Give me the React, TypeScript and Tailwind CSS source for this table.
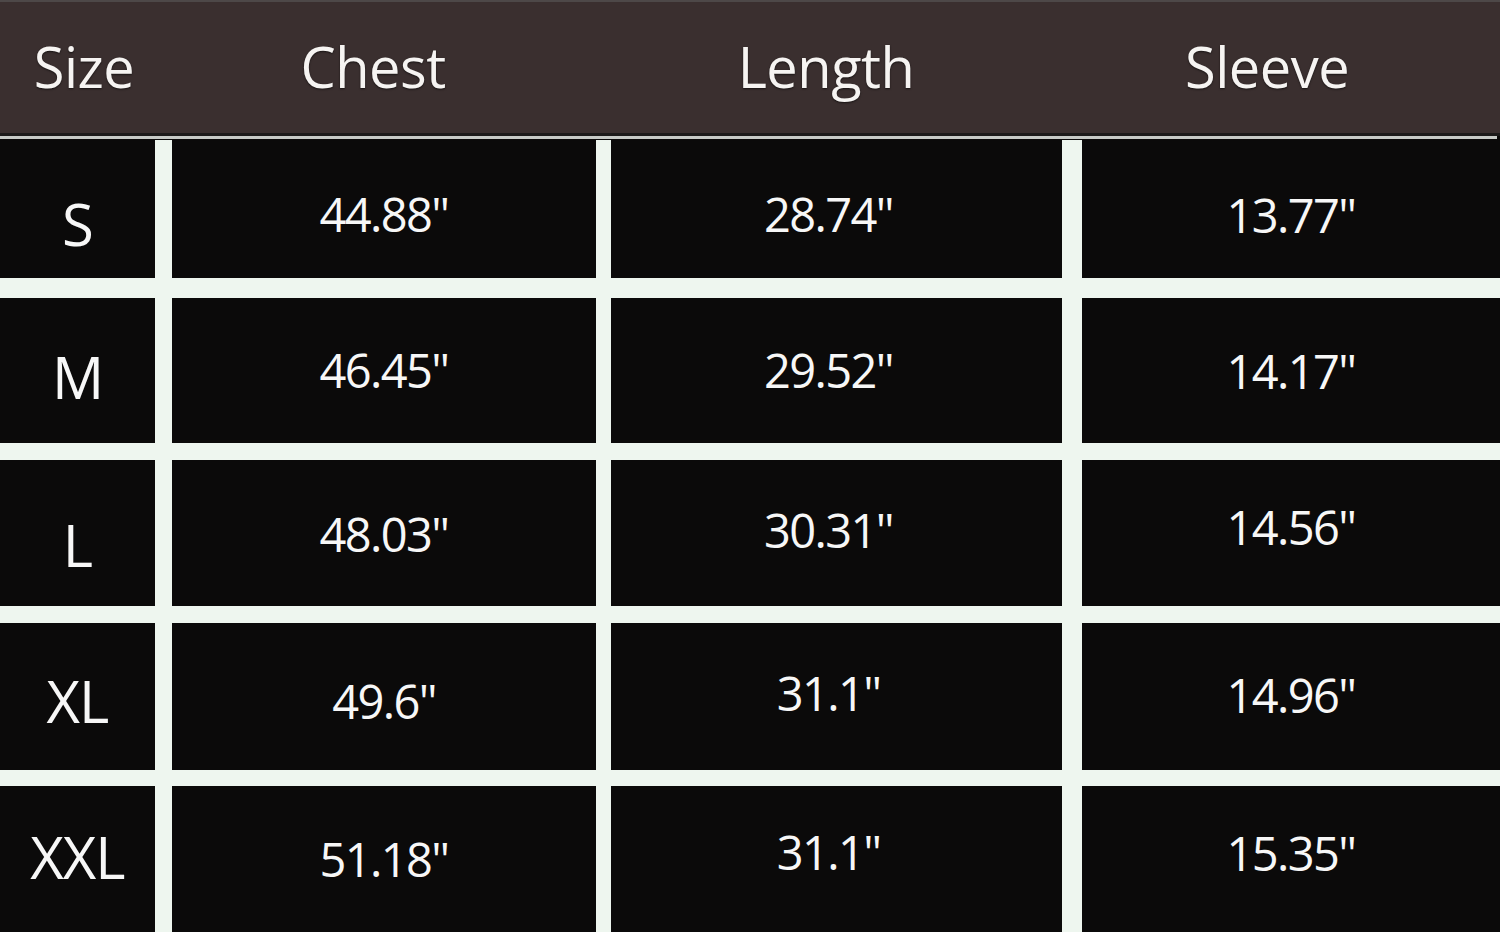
const font = { fontFamily: '"Open Sans", "Noto Sans", sans-serif' }

type Row = {
  size: string
  chest: string
  length: string
  sleeve: string
  h: string
  gap: string
  sizePad: string
  chestPad: string
  lengthPad: string
  sleevePad: string
}

const rows: Row[] = [
  { size: 'S', chest: '44.88"', length: '28.74"', sleeve: '13.77"', h: 'h-[138px]', gap: 'mt-0', sizePad: 'pt-[30px]', chestPad: 'pt-[10px]', lengthPad: 'pt-[10px]', sleevePad: 'pt-[12px]' },
  { size: 'M', chest: '46.45"', length: '29.52"', sleeve: '14.17"', h: 'h-[145px]', gap: 'mt-[20px]', sizePad: 'pt-[12px]', chestPad: 'pt-0', lengthPad: 'pt-0', sleevePad: 'pt-[2px]' },
  { size: 'L', chest: '48.03"', length: '30.31"', sleeve: '14.56"', h: 'h-[146px]', gap: 'mt-[17px]', sizePad: 'pt-[24px]', chestPad: 'pt-[2px]', lengthPad: 'pb-[6px]', sleevePad: 'pb-[12px]' },
  { size: 'XL', chest: '49.6"', length: '31.1"', sleeve: '14.96"', h: 'h-[147px]', gap: 'mt-[17px]', sizePad: 'pt-[8px]', chestPad: 'pt-[10px]', lengthPad: 'pb-[6px]', sleevePad: 'pb-[2px]' },
  { size: 'XXL', chest: '51.18"', length: '31.1"', sleeve: '15.35"', h: 'h-[146px]', gap: 'mt-[16px]', sizePad: 'pb-[4px]', chestPad: 'pt-0', lengthPad: 'pb-[14px]', sleevePad: 'pb-[12px]' },
]

function Cell({ text, className, big }: { text: string; className: string; big?: boolean }) {
  return (
    <div className={`flex items-center justify-center bg-[#0b0a0a] text-[#f7f7f7] ${className}`}>
      <span
        className={big ? 'text-[58px] leading-none tracking-[-1px]' : 'text-[47px] leading-none tracking-[-1.6px]'}
        style={font}
      >
        {text}
      </span>
    </div>
  )
}

export default function App() {
  return (
    <div className="w-[1500px] h-[932px] overflow-hidden bg-[#eef6ef] flex flex-col">
      <header className="flex flex-col h-[140px] bg-[#0b0a0a]">
        <div className="h-[2px] bg-[#4d4848]" />
        <div
          className="grid grid-cols-[168px_410px_496px_386px_1fr] items-center h-[131px] pb-[4px] bg-[#3a2f2f] text-[#f6f4f2] text-[56px] tracking-[-0.5px]"
          style={{ ...font, textShadow: '0 1px 2px rgba(0,0,0,0.6)' }}
        >
          <div className="text-center">Size</div>
          <div className="text-center">Chest</div>
          <div className="text-center">Length</div>
          <div className="text-center">Sleeve</div>
          <div />
        </div>
        <div className="h-[3px] bg-[#1c1a1a]" />
        <div className="h-[3px] w-[1497px] bg-[#c7cac7]" />
        <div className="h-px bg-[#0b0a0a]" />
      </header>

      {rows.map((r) => (
        <div key={r.size} className={`flex ${r.h} ${r.gap}`}>
          <Cell text={r.size} big className={`w-[155px] ${r.sizePad}`} />
          <Cell text={r.chest} className={`ml-[17px] w-[424px] ${r.chestPad}`} />
          <Cell text={r.length} className={`ml-[15px] w-[451px] pr-[16px] ${r.lengthPad}`} />
          <Cell text={r.sleeve} className={`ml-[20px] flex-1 ${r.sleevePad}`} />
        </div>
      ))}
    </div>
  )
}
